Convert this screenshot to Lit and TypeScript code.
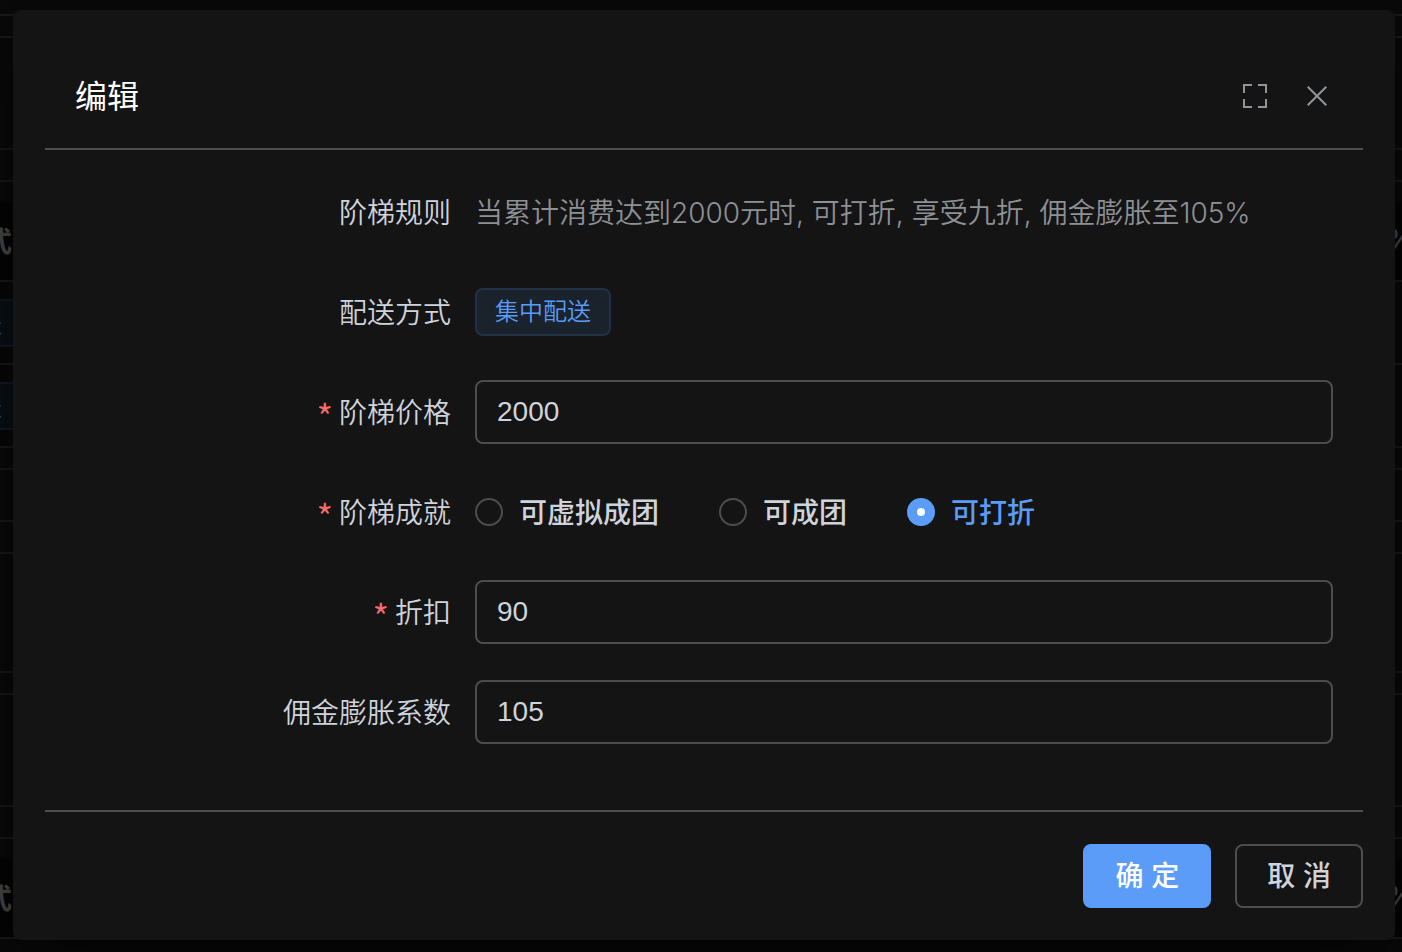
import { LitElement, html, css } from "lit";
import { customElement, state } from "lit/decorators.js";

interface Band {
  kind: string;
  head?: boolean;
  tag?: boolean;
}

const BANDS: Band[] = [
  { kind: "edge" },
  { kind: "gutter" },
  { kind: "card" },
  { kind: "space" },
  { kind: "pad" },
  { kind: "head", head: true },
  { kind: "line", tag: true },
  { kind: "line", tag: true },
  { kind: "gutter" },
  { kind: "strip" },
  { kind: "space" },
  { kind: "tall" },
  { kind: "gutter" },
  { kind: "card" },
  { kind: "space" },
  { kind: "pad" },
  { kind: "head", head: true },
  { kind: "rest" },
];

@customElement("tier-backdrop")
export class TierBackdrop extends LitElement {
  static styles = css`
    :host {
      display: flex;
      flex-direction: column;
      overflow: hidden;
      background: #0a0a0a;
    }
    .band {
      display: flex;
      flex: none;
      align-items: center;
      justify-content: space-between;
      box-sizing: border-box;
      border-bottom: 2px solid #1b1b1b;
      color: #505154;
      font-size: 28px;
      font-weight: 700;
      white-space: nowrap;
    }
    .edge { height: 16px; }
    .gutter { height: 22px; }
    .card { height: 112px; }
    .space { height: 32px; }
    .pad { height: 20px; border-bottom: 0; }
    .head { height: 80px; padding-bottom: 2px; background: #050505; }
    .line { height: 83px; background: #080808; }
    .strip { height: 52px; }
    .tall { height: 119px; }
    .rest { height: 14px; border-bottom: 0; }
    .left { margin-left: -16px; }
    .right {
      margin-right: -12px;
      font-family: Inter, sans-serif;
      font-weight: 500;
    }
    .tag {
      box-sizing: border-box;
      width: 48px;
      height: 48px;
      margin-left: -32px;
      border: 2px solid #111d2b;
      background: #0a1118;
      color: #2f5a94;
      font-size: 24px;
      font-weight: 400;
      line-height: 44px;
      text-align: center;
    }
    .tag span { margin-left: -4px; }
  `;

  render() {
    return BANDS.map(
      (b) => html`<div class="band ${b.kind}">
        ${b.head
          ? html`<span class="left">式</span><span class="right">%</span>`
          : ""}
        ${b.tag ? html`<span class="tag"><span>送</span></span>` : ""}
      </div>`
    );
  }
}

@customElement("app-root")
export class AppRoot extends LitElement {
  static styles = css`
    :host {
      display: grid;
      min-height: 100vh;
      overflow: hidden;
      background: #0a0a0a;
      color: #cfd3dc;
      font-family: "Noto Sans CJK SC", sans-serif;
      font-size: 28px;
      font-weight: 350;
      line-height: 60px;
    }
    tier-backdrop,
    .dialog {
      grid-area: 1 / 1;
    }
    tier-backdrop {
      height: 0;
      min-height: 100%;
    }
    .dialog {
      z-index: 1;
      align-self: start;
      box-sizing: border-box;
      margin: 10px 7px 12px 13px;
      padding: 32px;
      border-radius: 8px;
      background: #141414;
      box-shadow: 0 24px 72px 16px rgba(0, 0, 0, 0.5);
    }
    header {
      display: flex;
      align-items: center;
      gap: 30px;
      height: 104px;
      padding: 2px 30px 0;
      border-bottom: 2px solid #4c4d4f;
    }
    h2 {
      flex: 1;
      margin: 0;
      padding-bottom: 4px;
      color: #fff;
      font-size: 32px;
      font-weight: 400;
    }
    button {
      font: inherit;
      cursor: pointer;
    }
    .icon {
      width: 32px;
      height: 32px;
      padding: 0;
      border: 0;
      background: none;
      color: #909399;
    }
    .icon svg {
      display: block;
      width: 32px;
      height: 32px;
      fill: none;
      stroke: currentColor;
      stroke-width: 2;
    }
    form {
      display: grid;
      gap: 36px;
      padding: 30px 30px 66px;
    }
    .row {
      display: grid;
      grid-template-columns: 376px minmax(0, 1fr);
      column-gap: 24px;
      align-items: center;
      align-content: center;
      min-height: 64px;
    }
    .text-row {
      align-items: baseline;
    }
    .label,
    .option span {
      padding-bottom: 2px;
    }
    .label {
      text-align: right;
    }
    .required::before {
      content: "*";
      margin-right: 6px;
      color: #f56c6c;
      font-size: 36px;
      line-height: 0;
      vertical-align: -8px;
    }
    .rule {
      color: #8d9095;
      font-family: Inter, "Noto Sans CJK SC", sans-serif;
    }
    .value-tag {
      justify-self: start;
      padding: 0 18px;
      border: 2px solid #213147;
      border-radius: 8px;
      background: #1a222c;
      color: #5b9cf8;
      font-family: "Liberation Sans", "Noto Sans CJK SC", sans-serif;
      font-size: 24px;
      line-height: 44px;
    }
    .field {
      box-sizing: border-box;
      width: 100%;
      height: 64px;
      padding: 0 20px;
      border: 2px solid #4c4d4f;
      border-radius: 8px;
      outline: 0;
      background: transparent;
      color: inherit;
      font: 28px "Liberation Sans", "Noto Sans CJK SC", sans-serif;
    }
    .options {
      display: flex;
      flex-wrap: wrap;
      column-gap: 60px;
    }
    .option {
      display: flex;
      align-items: center;
      gap: 16px;
      font-weight: 500;
      cursor: pointer;
    }
    .option input {
      appearance: none;
      box-sizing: border-box;
      width: 28px;
      height: 28px;
      margin: 0;
      border: 2px solid #4c4d4f;
      border-radius: 50%;
      background: transparent;
    }
    .option input:checked {
      border: 10px solid #5b9cf8;
      background: #fff;
    }
    .option input:checked + span {
      color: #5b9cf8;
    }
    footer {
      display: flex;
      justify-content: flex-end;
      gap: 24px;
      padding-top: 32px;
      border-top: 2px solid #4c4d4f;
    }
    .action {
      box-sizing: border-box;
      height: 64px;
      padding: 2px 30px 0;
      border: 2px solid #4c4d4f;
      border-radius: 8px;
      background: transparent;
      color: #cfd3dc;
      font-family: "Liberation Sans", "Noto Sans CJK SC", sans-serif;
      font-weight: 500;
      line-height: 40px;
    }
    .primary {
      border-color: #5b9cf8;
      background: #5b9cf8;
      color: #fff;
    }
  `;

  @state() private achievement = "可打折";

  private options = ["可虚拟成团", "可成团", "可打折"];

  private field(id: string, label: string, value: string, required: boolean) {
    return html`<div class="row">
      <label class="label ${required ? "required" : ""}" for=${id}>${label}</label>
      <input class="field" id=${id} type="text" .value=${value} ?required=${required} />
    </div>`;
  }

  render() {
    return html`
      <tier-backdrop aria-hidden="true"></tier-backdrop>
      <section class="dialog" role="dialog" aria-labelledby="title">
        <header>
          <h2 id="title">编辑</h2>
          <button class="icon" type="button" aria-label="全屏">
            <svg viewBox="0 0 32 32">
              <path d="M5 13V5h8M19 5h8v8M27 19v8h-8M13 27H5v-8" />
            </svg>
          </button>
          <button class="icon" type="button" aria-label="关闭">
            <svg viewBox="0 0 32 32">
              <path d="M6.7 6.7l18.6 18.6M25.3 6.7L6.7 25.3" />
            </svg>
          </button>
        </header>
        <form>
          <div class="row text-row">
            <span class="label">阶梯规则</span>
            <span class="rule">当累计消费达到2000元时, 可打折, 享受九折, 佣金膨胀至105%</span>
          </div>
          <div class="row">
            <span class="label">配送方式</span>
            <span class="value-tag">集中配送</span>
          </div>
          ${this.field("price", "阶梯价格", "2000", true)}
          <div class="row" role="radiogroup" aria-labelledby="achievement">
            <span class="label required" id="achievement">阶梯成就</span>
            <div class="options">
              ${this.options.map(
                (o) => html`<label class="option">
                  <input
                    type="radio"
                    name="achievement"
                    .checked=${this.achievement === o}
                    @change=${() => (this.achievement = o)}
                  />
                  <span>${o}</span>
                </label>`
              )}
            </div>
          </div>
          ${this.field("discount", "折扣", "90", true)}
          ${this.field("ratio", "佣金膨胀系数", "105", false)}
        </form>
        <footer>
          <button class="action primary" type="button">确 定</button>
          <button class="action" type="button">取 消</button>
        </footer>
      </section>
    `;
  }
}
